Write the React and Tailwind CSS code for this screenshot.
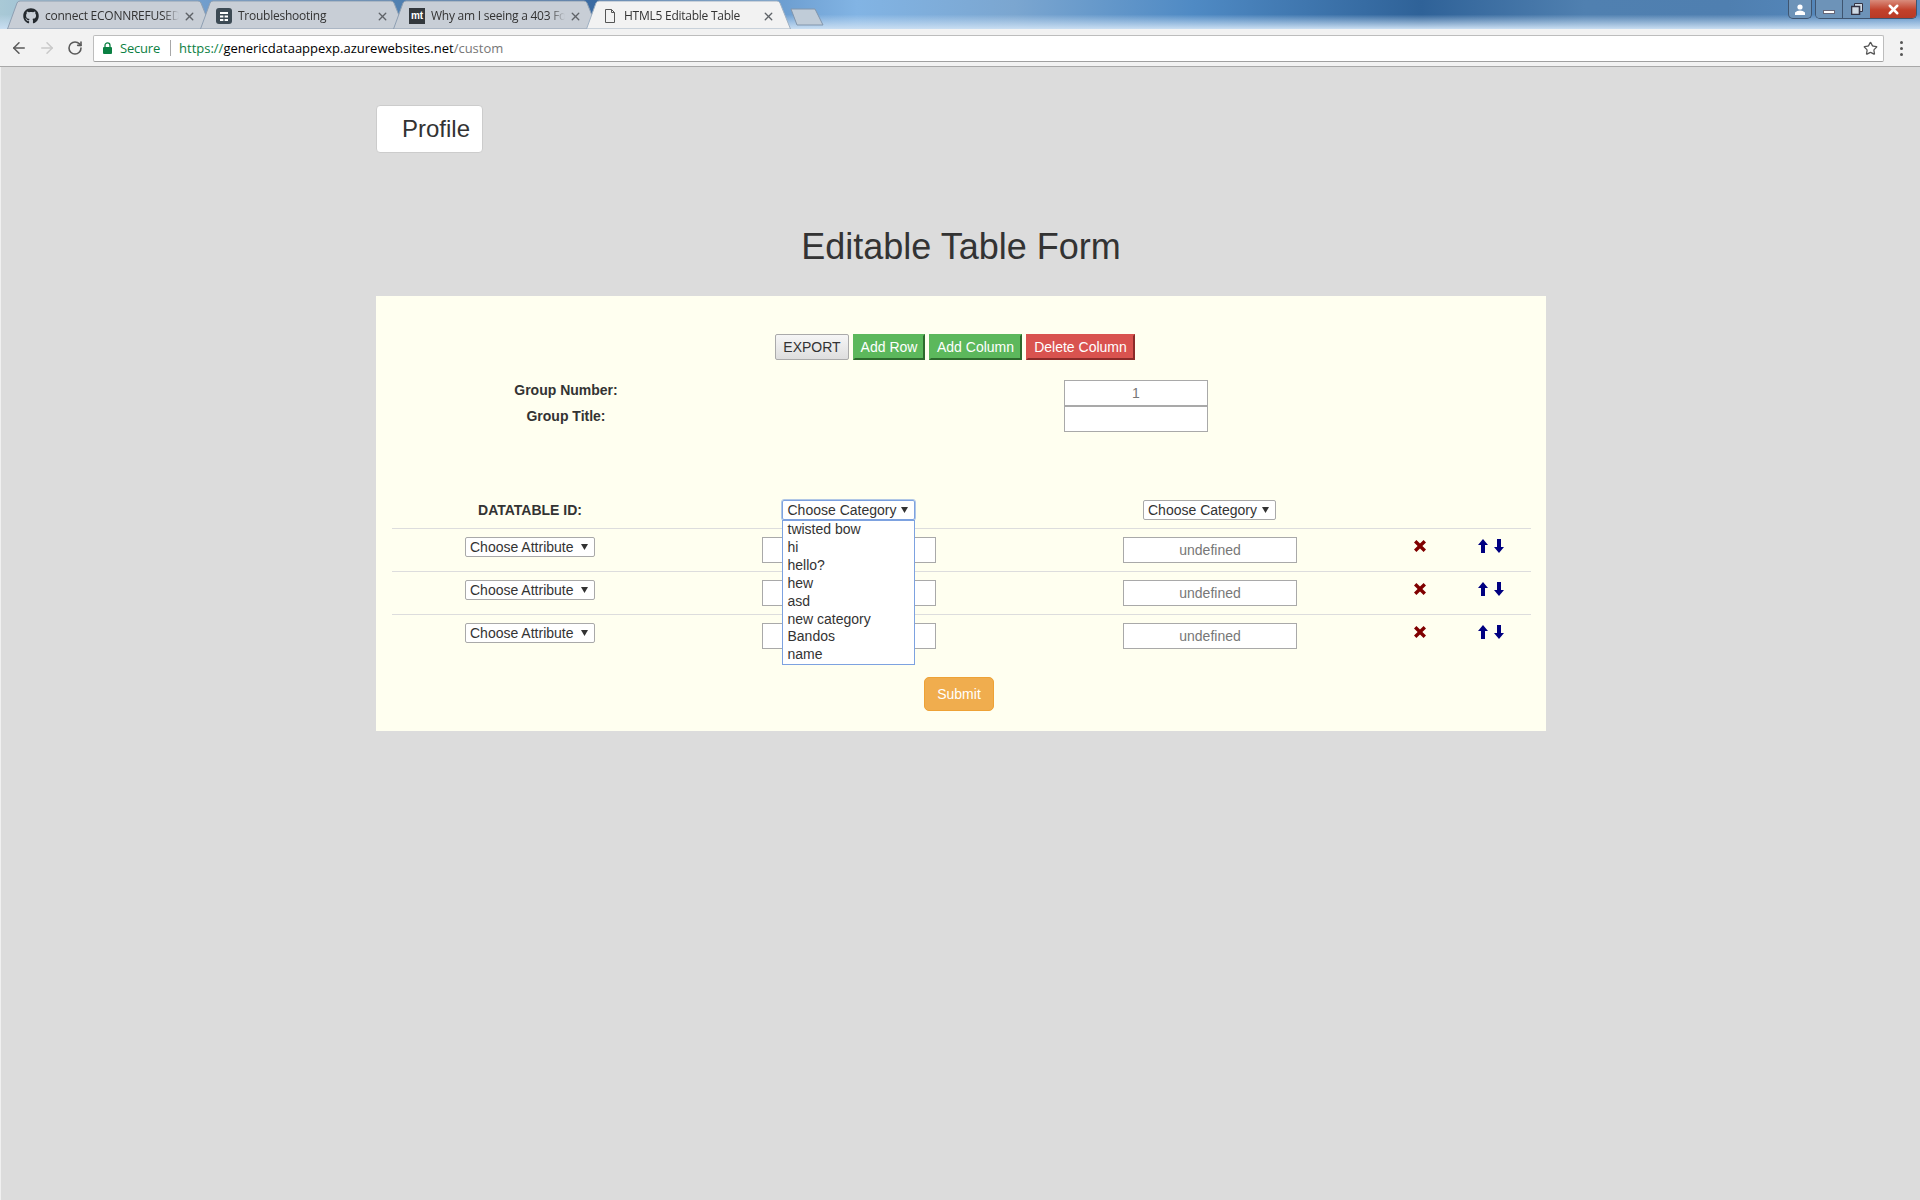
import React from 'react'
import { ArrowLeft, ArrowRight, RotateCw, Star, X } from 'lucide-react'
import { FaGithub } from 'react-icons/fa'

const categories = ['twisted bow', 'hi', 'hello?', 'hew', 'asd', 'new category', 'Bandos', 'name']

const DocIcon = () => (
  <svg width="16" height="16" viewBox="0 0 16 16" fill="none" stroke="#555" strokeWidth="1">
    <path d="M3.5 1.5h6l3 3v10h-9z M9.5 1.5v3h3" />
  </svg>
)

const TroubleIcon = () => (
  <svg width="16" height="16" viewBox="0 0 16 16">
    <rect width="16" height="16" rx="3" fill="#3c4a54" />
    <path d="M4 4h8v2H4z M4 7.5h3.4v2H4z M8.6 7.5H12v2H8.6z M4 11h3.4v2H4z M8.6 11H12v2H8.6z" fill="#fff" />
  </svg>
)

const MtIcon = () => (
  <div className="w-4 h-4 bg-[#33383d] text-white text-[10px] leading-4 text-center font-bold font-['Liberation_Sans',sans-serif]">mt</div>
)

const Tab = ({ icon, title, active }) => (
  <div className={`relative w-[205px] h-[29px] -mr-[12px] shrink-0 ${active ? 'z-10' : ''}`}>
    <svg className="absolute inset-0" width="205" height="30" viewBox="0 0 205 30">
      <path
        d="M0.5 29 L10 3 Q11 1 13 1 L191 1 Q193 1 194 3 L204.5 29 Z"
        fill={active ? '#f2f2f2' : '#c8ced6'}
        stroke={active ? '#9fb0c2' : '#8e9fb2'}
      />
    </svg>
    <div className="relative flex items-center h-full pl-[16px] pt-[3px]">
      <div className="w-[22px] shrink-0">{icon}</div>
      <div className="w-[134px] whitespace-nowrap overflow-hidden text-xs tracking-[-0.25px] text-[#333] [mask-image:linear-gradient(to_right,black_88%,transparent)]">
        {title}
      </div>
      <X size={13} strokeWidth={2.5} className="ml-[4px] text-[#5f6368]" />
    </div>
  </div>
)

const Select = ({ label, focused, width }) => (
  <div className={`flex items-center justify-between h-5 pr-[6px] rounded-[2px] bg-white text-sm leading-none text-[#333] whitespace-nowrap border ${width} ${focused ? 'pl-[5px] border-[#7da2e0] outline outline-[#7da2e0]/60' : 'pl-1 border-[#a9a9a9]'}`}>
    <span>{label}</span>
    <svg width="7" height="6" viewBox="0 0 7 6"><path d="M0 0h7L3.5 6z" fill="#333" /></svg>
  </div>
)

const TextBox = ({ className = '', placeholder, value }) => (
  <input
    readOnly
    value={value}
    placeholder={placeholder}
    className={`block bg-white border border-[#a9a9a9] text-sm font-normal text-center text-[#777] placeholder:text-[#777] outline-none ${className}`}
  />
)

const DeleteIcon = () => (
  <svg width="12" height="12" viewBox="1 1 11 11"><path d="M1 3.2 3.2 1 6.5 4.3 9.8 1 12 3.2 8.7 6.5 12 9.8 9.8 12 6.5 8.7 3.2 12 1 9.8 4.3 6.5z" fill="#800000" /></svg>
)

const UpIcon = () => (
  <svg width="10" height="14" viewBox="0 0 10 14"><path d="M5 0l5 6H7v8H3V6H0z" fill="#000080" /></svg>
)

const DownIcon = () => (
  <svg width="10" height="14" viewBox="0 0 10 14"><path d="M3 0h4v8h3l-5 6-5-6h3z" fill="#000080" /></svg>
)

const App = () => {
  return (
    <div className="h-screen overflow-hidden flex flex-col bg-[#dcdcdc] font-['Liberation_Sans',sans-serif]">
      {/* browser chrome */}
      <div className="relative h-[29px] flex pl-[7px] font-['Open_Sans',sans-serif] bg-[linear-gradient(to_bottom,transparent_50%,#c9def2_100%),linear-gradient(to_right,#a9c9d6_0,#6f9ccc_212px,#4f7fb0_405px,#3a6aa2_600px,#82b4e4_857px,#7ba6d0_1014px,#4f8ac4_1193px,#2f6298_1421px,#5080b0_1585px,#4f7fb0_1728px,#5a8fc5_1920px)]">
        <Tab icon={<FaGithub size={16} className="text-[#24292e]" />} title="connect ECONNREFUSED" />
        <Tab icon={<TroubleIcon />} title="Troubleshooting" />
        <Tab icon={<MtIcon />} title="Why am I seeing a 403 Forbidden" />
        <Tab active icon={<DocIcon />} title="HTML5 Editable Table" />
        <svg className="mt-[8px] ml-[11px]" width="34" height="18" viewBox="0 0 34 18">
          <path d="M1 1h24l8 16H7z" fill="#c0ccd8" stroke="#8296ac" />
        </svg>

        <div className="absolute top-0 right-[3px] flex gap-[3px]">
          <div className="flex items-center justify-center w-6 h-[19px] rounded-b-[5px] border border-t-0 border-[#3f5570] bg-[#6d93b8]">
            <svg width="12" height="11" viewBox="0 0 12 11"><circle cx="6" cy="3" r="2.6" fill="#fff" /><path d="M1 11V8.5Q3 6.5 6 6.5T11 8.5V11z" fill="#fff" /></svg>
          </div>
          <div className="flex h-[19px] rounded-b-[5px] border border-t-0 border-[#3f5570] overflow-hidden">
            <div className="flex items-center justify-center w-[27px] bg-[#6d93b8] border-r border-[#3f5570]">
              <div className="w-[12px] h-[4px] mt-[5px] bg-white border border-[#667]" />
            </div>
            <div className="flex items-center justify-center w-[27px] bg-[#6d93b8]">
              <svg width="12" height="12" viewBox="0 0 12 12" fill="#cfd9e3" stroke="#334">
                <path d="M3.5 .5h8v8h-8z" />
                <path d="M.5 3.5h8v8h-8z" strokeWidth="1.6" />
              </svg>
            </div>
            <div className="flex items-center justify-center w-[46px] bg-[linear-gradient(to_bottom,#d98c7c,#c2412b_55%,#b83a26)]">
              <X size={15} strokeWidth={4} className="text-white" />
            </div>
          </div>
        </div>
      </div>

      <div className="relative z-20 h-[38px] pt-px flex items-center bg-[#f2f2f2] border-b border-[#a8a8a8]">
        <ArrowLeft size={18} className="ml-[10px] text-[#5a5a5a]" />
        <ArrowRight size={18} className="ml-[10px] text-[#c9c9c9]" />
        <RotateCw size={16} strokeWidth={2.4} className="ml-[11px] text-[#5a5a5a]" />
        <div className="ml-[10px] w-[1791px] h-[27px] flex items-center bg-white rounded-[2px] border border-[#bdbdbd] border-b-[#a0a0a0]">
          <svg className="ml-[9px]" width="9" height="12" viewBox="0 0 9 12">
            <path d="M2 5V3.4a2.5 2.5 0 0 1 5 0V5" fill="none" stroke="#0b8043" strokeWidth="1.3" />
            <rect y="5" width="9" height="7" rx="1" fill="#0b8043" />
          </svg>
          <span className="ml-[8px] pt-px text-[#0b8043] font-['Open_Sans',sans-serif] text-[13px] tracking-[-0.2px]">Secure</span>
          <div className="ml-[10px] w-px h-4 bg-[#a8a8a8]" />
          <div className="ml-2 pt-px font-['Open_Sans',sans-serif] text-[13px]">
            <span className="text-[#0b8043]">https://</span>
            <span className="text-black">genericdataappexp.azurewebsites.net</span>
            <span className="text-[#777]">/custom</span>
          </div>
          <Star size={15} strokeWidth={2} className="ml-auto mr-[5px] text-[#555]" />
        </div>
        <div className="ml-[16px] flex flex-col gap-[3px]">
          <div className="w-[3px] h-[3px] rounded-full bg-[#555]" />
          <div className="w-[3px] h-[3px] rounded-full bg-[#555]" />
          <div className="w-[3px] h-[3px] rounded-full bg-[#555]" />
        </div>
      </div>

      {/* page */}
      <div className="flex-1 border-l border-[#f0f0f0]">
        <div className="w-[1170px] ml-[375px] text-[#333]">
          <div className="mt-[38px] w-[107px] h-[48px] pl-[25px] bg-white border border-[#ccc] rounded text-2xl leading-[46px]">Profile</div>

          <h1 className="mt-[74px] text-4xl leading-10 text-center">Editable Table Form</h1>

          <div className="mt-[29px] h-[435px] pt-[38px] px-[16px] bg-[#fffff0]">
            <div className="flex justify-center gap-1 h-[26px] pr-[12px] text-sm">
              <button className="w-[74px] rounded-[2px] border border-[#aaa] bg-[linear-gradient(to_bottom,#f6f6f6,#dedede)] text-[#333]">EXPORT</button>
              <button className="w-[72px] border-2 border-[#5cb85c] border-r-[#2d6a2d] border-b-[#2d6a2d] bg-[#5cb85c] text-white">Add Row</button>
              <button className="w-[93px] border-2 border-[#5cb85c] border-r-[#2d6a2d] border-b-[#2d6a2d] bg-[#5cb85c] text-white">Add Column</button>
              <button className="w-[109px] border-2 border-[#d9534f] border-r-[#8b2b29] border-b-[#8b2b29] bg-[#d9534f] text-white">Delete Column</button>
            </div>

            <div className="mt-[20px] grid grid-cols-[348px_792px] text-sm font-bold leading-5">
              <div className="text-center h-[26px]">Group Number:</div>
              <div className="flex justify-center"><TextBox className="w-[144px] h-[26px]" value="1" /></div>
              <div className="text-center h-[26px]">Group Title:</div>
              <div className="flex justify-center"><TextBox className="w-[144px] h-[26px]" value="" /></div>
            </div>

            <div className="mt-[68px] grid grid-cols-[276px_362px_360px_58px_83px] text-sm">
              <div className="pb-2 text-center font-bold leading-5">DATATABLE ID:</div>
              <div className="pb-2 flex justify-center pr-[2px]">
                <div className="relative">
                  <Select label="Choose Category" focused width="w-[133px]" />
                  <div className="absolute z-10 top-full left-0 w-[133px] py-0 pl-[5px] bg-white border border-[#7da2e0] leading-[17.9px] text-[#333]">
                    {categories.map((c) => <div key={c}>{c}</div>)}
                  </div>
                </div>
              </div>
              <div className="pb-2 flex justify-center pr-[1px]"><Select label="Choose Category" width="w-[133px]" /></div>
              <div />
              <div />

              {[0, 1, 2].map((i) => (
                <div key={i} className="col-span-5 grid grid-cols-subgrid h-[43px] py-2 border-t border-[#dddddd]">
                  <div className="flex justify-center items-start"><Select label="Choose Attribute" width="w-[130px]" /></div>
                  <div className="flex justify-center items-start"><TextBox className="w-[174px] h-[26px]" placeholder="" /></div>
                  <div className="flex justify-center items-start"><TextBox className="w-[174px] h-[26px]" placeholder="undefined" /></div>
                  <div className="flex justify-center pt-[3px] pl-[1px] items-start"><DeleteIcon /></div>
                  <div className="flex justify-center pt-[2px] pl-[2px] gap-[6px] items-start"><UpIcon /><DownIcon /></div>
                </div>
              ))}
            </div>

            <div className="mt-[20px] flex justify-center pr-[4px]">
              <button className="w-[70px] h-[34px] rounded-[5px] bg-[#f0ad4e] border border-[#eea236] text-sm text-white">Submit</button>
            </div>
          </div>
        </div>
      </div>
    </div>
  )
}

export default App
